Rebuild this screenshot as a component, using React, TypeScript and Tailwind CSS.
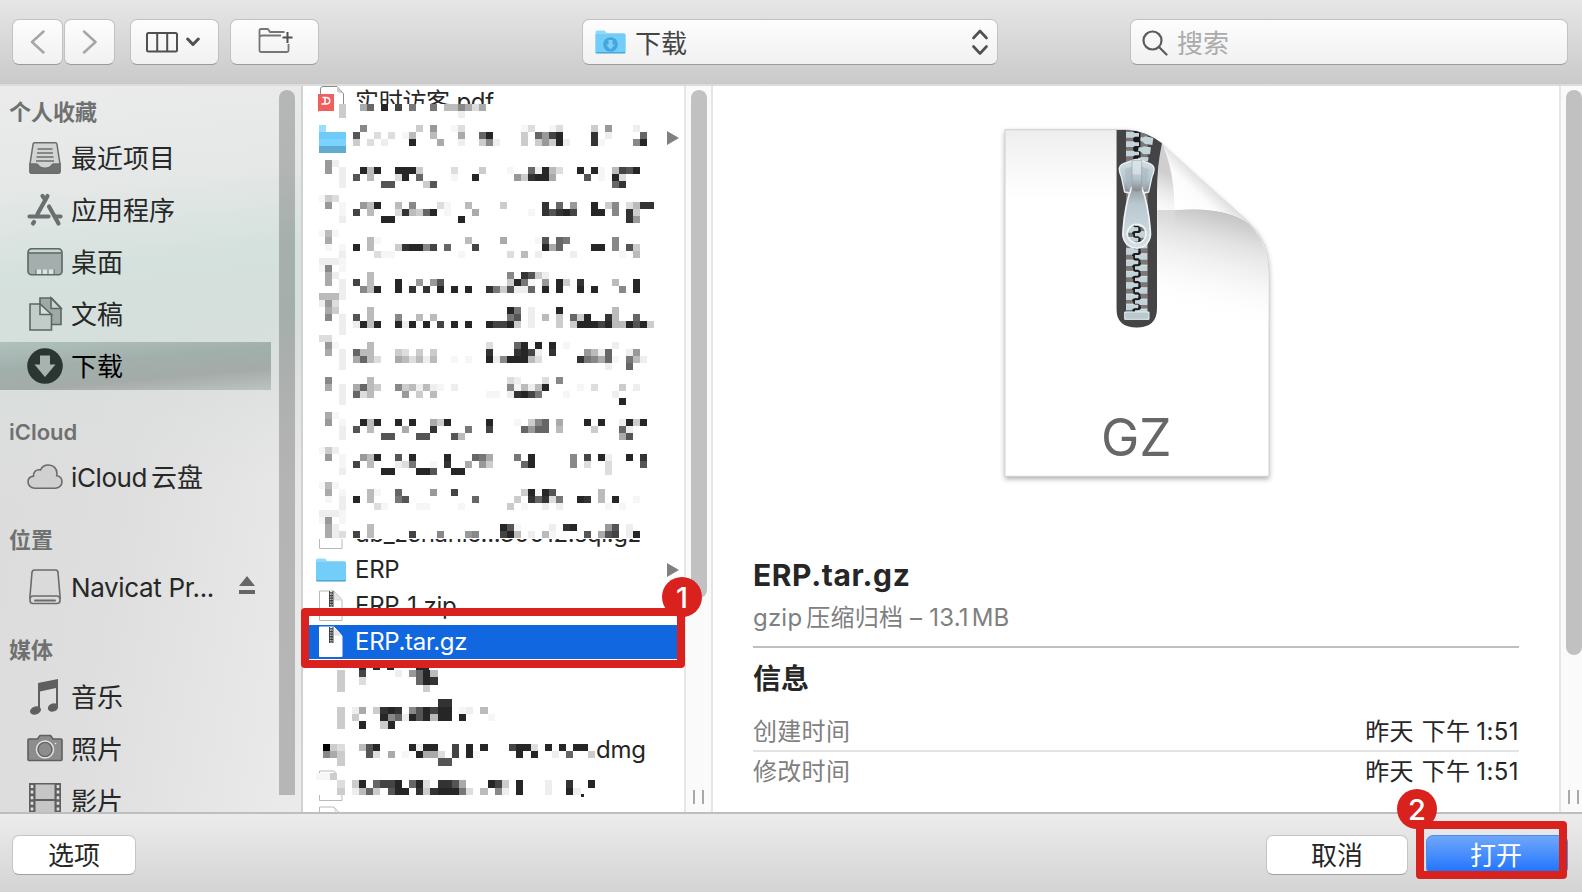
import { ReactNode } from 'react';
import { clsx } from 'clsx';

// Each token is a column number followed by one grey level digit (0 = black, f = white)
const upperMosaic: Record<number, string> = {
    0: '3c 6a 76 92 114 137 167 18b 19b 208 21a 22d 23a',
    1: '3c 20e',
    3: '68 14c 169 19f 20d 29f 30d 33f 34d 39c 419 45e',
    4: '55 8d 10d 12f 13b 16b 20a 236 242 29c 316 329 334 342 393 41e 466',
    5: '5c 7d 9e 132 17a 20e 23c 248 25e 29c 31c 329 33c 342 35e 393 40f 458 462',
    8: '19 2e',
    9: '19 3e 62 7b 82 112 122 132 14c 19d 23c 27f 306 31e 322 33b 34d 372 392 40f 42b 434 445 452',
    10: '3e 55 7b 11d 122 146 19f 222 289 29c 303 312 322 33a 385 40f 422 43d',
    11: '3e 95 105 15c 165 426 433',
    13: '0f 1c 2d',
    14: '19 3f 69 7b 82 11b 138 17d 18f 21b 26c 323 346 369 392 41c 428 44d 45b 463 473',
    15: '3f 54 7b 11d 123 13b 14c 156 162 18f 22a 30f 323 335 343 352 364 392 402 428 443 45c',
    16: '3e 92 102 202 443 459',
    18: '0f 1b 2f',
    19: '1a 7b 8f 21b 26a 31f 325 346 357 428',
    20: '1f 3f 52 7b 11c 123 132 142 158 164 186 224 322 33a 346 392 402 428 445 45c',
    21: '3e 8d 9f 10f 20f 27d 29b 31e 36e 43f 45b',
    22: '0e 1e 2e 3f',
    23: '0f 18 3f',
    24: '1a 2e 7b 278 293 305 31c 32e',
    25: '1a 3e 54 7b 112 149 169 175 27c 282 297 30f 329 342 35c 373 42b 452',
    26: '3e 68 7b 82 112 133 153 172 192 212 243 257 26c 275 28e 29e 306 322 342 372 392 438 452',
    27: '0b 1b 2b 3e',
    28: '0e 19 2d',
    29: '1a 2c 7b 272 287 30e 342 42b',
    30: '18 3e 55 7b 118 14b 16b 277 285 30e 32b 34c 366 37c 382 413 42b 456',
    31: '3e 5e 62 7b 82 112 12e 132 152 174 192 212 242 254 264 272 28c 30e 34c 36c 372 382 392 404 412 42b 43b 442 455 462 47c',
    32: '3e',
    33: '0d 1d',
    34: '19 2f 7b 24d 286 292 312 332 35f 42e',
    35: '1a 3e 56 6b 7b 11c 12d 14c 16c 243 283 292 304 31e 333 389 39b 40e 416 44e 459',
    36: '3e 5a 66 7b 8d 11a 12b 13d 14b 15e 16b 19f 21f 242 25e 268 272 282 292 30b 31d 373 387 398 40a 416 42f 447 45b 46e',
    37: '3e 41e 446',
    39: '18 7b 27d 28e 32d 348',
    40: '1a 3e 5a 66 7b 8c 118 12c 13b 14e 15b 16e 17f 19e 278 28f 29b 30e 31b 322 37f 39d 43c 45e',
    41: '3e 56 6d 7b 129 14c 16b 24f 25f 27e 283 292 304 317 35f 42e',
    42: '3e 432',
    44: '1a 2f',
    45: '19 3f 62 7b 82 112 132 16a 17c 182 242 28f 30c 318 326 34a 382 402 43e 442 45c 462',
    46: '3e 55 7b 12a 163 217 244 296 309 316 326 34b 39c 436 44e',
    47: '3e 95 105 145 155 195 20b 43a 445',
    49: '0f 1c 2e',
    50: '19 3f 69 7b 82 115 132 182 226 237 24a 287 302 368 384 402 41e 442 463',
    51: '3f 54 7b 11e 12d 137 16f 183 21a 239 24c 296 302 368 38d 41d 465',
    52: '3e 92 102 142 152 165 192 202 41d',
    54: '0f 1b 2f',
    55: '1a 3f 7b 8f 116 169 194 29c 302 31f 322 335 40b',
    56: '1f 3e 52 7b 117 125 226 28c 303 316 323 33d 347 372 383 40b 422 45f',
    57: '3e 8d 9f 14f 15f 20f 27c 29f 32e 34e 41f 43f',
    58: '0e 1e 2e 3f',
    59: '0f 19 3f',
    60: '1a 2e 7b 262 275 28f 33e 353 362 419 425 44e',
    61: '1a 2e 3d 54 7b 134 178 219 228 264 272 28b 30e 32b 33f 385 40a 415 424 44e 452',
};

const lowerMosaic: Record<number, string> = {
    0: '3c 64 11e 139 146 152 16b',
    1: '3c 6d 146 152 163',
    2: '3c 15c',
    4: '173 183',
    5: '3c 5e 6a 8c 93 102 113 138 145 152 164 172 182 20f 21e 23b',
    6: '3c 5c 92 108 116 12e 132 145 152 16b 172 182 202 24f',
    7: '3c 62 9c 102',
    10: '10 2c 3d 6b 75 82 132 14e 152 162 194 212 232 274 282 292 30d 322 342 362 372',
    11: '18 2a 3c 75 8d 10a 12f 142 15a 16a 17d 194 212 22f 282 302 33e 356 38c',
    12: '3c 175 185',
    14: '0f 1f 2c',
    15: '3d 5c 62 86 94 104 112 136 142 15d 173 183 195 20a 242 254 26c 282 32e 353 382',
    16: '3c 5e 6b 76 8c 105 112 122 143 15c 163 172 182 192 207 21d 23b 258 26e 282 32e 352 36e',
};

interface MosaicProps {
    cells: Record<number, string>;
    cellWidth: number;
    cellHeight: number;
    left: number;
    top: number;
}

function Mosaic({ cells, cellWidth, cellHeight, left, top }: MosaicProps) {
    return (
        <g shapeRendering="crispEdges">
            {Object.entries(cells).flatMap(([row, line]) =>
                line.split(' ').map((token) => {
                    const shade = token.slice(-1);
                    const x = left + Number(token.slice(0, -1)) * cellWidth;
                    const y = top + Number(row) * cellHeight;
                    const fill = shade === 'f' ? '#f6f6f6' : shade === '2' ? '#262626' : `#${shade}${shade}${shade}`;
                    return (
                        <rect
                            key={`${row}-${token}`}
                            x={Math.round(x)}
                            y={Math.round(y)}
                            width={Math.round(x + cellWidth) - Math.round(x)}
                            height={Math.round(y + cellHeight) - Math.round(y)}
                            fill={fill}
                        />
                    );
                }),
            )}
        </g>
    );
}

/* ---------- icons ---------- */

const iconBox = 'w-9 h-9 shrink-0';

function RecentsIcon() {
    return (
        <svg className={iconBox} viewBox="0 0 36 36" fill="none" stroke="#6b6d6d" strokeWidth="1.5">
            <path d="M7.500 2.800h21c.8 0 1.200.4 1.400 1.200L33 24v7.500c0 1-.8 1.700-1.700 1.700H4.700c-1 0-1.700-.7-1.700-1.700V24L6.100 4c.2-.8.600-1.200 1.400-1.200z" fill="#d2d4d4" />
            <path d="M3 24h6.500c.8 0 1.200.3 1.700 1.200 1.200 2 3.400 3 6.800 3s5.600-1 6.800-3c.5-.9.900-1.200 1.700-1.200H33v7.500c0 1-.8 1.700-1.700 1.700H4.700c-1 0-1.700-.7-1.700-1.700z" fill="#6f7171" />
            <path d="M10.500 9h15M10 13h16M9.500 17h17M9 21h18" />
        </svg>
    );
}

function AppsIcon() {
    return (
        <svg className={iconBox} viewBox="0 0 36 36" fill="none" stroke="#687070" strokeWidth="4.200" strokeLinecap="round">
            <path d="M20.500 4L10.500 22M15.500 4l3 4M22 14.500L31.500 31.500M6 31.500l1-1.500" />
            <path d="M2.500 24.500h19M29 24.500h4.500" />
        </svg>
    );
}

function DesktopIcon() {
    return (
        <svg className={iconBox} viewBox="0 0 36 36">
            <rect x="1" y="4.700" width="34" height="26" rx="3.500" fill="#a3aead" stroke="#5c6866" strokeWidth="1.600" />
            <path d="M2.500 8.500V7.500Q2.500 5.700 4.500 5.700h27q2 0 2 1.800v1z" fill="#cbd6d3" />
            <path d="M2 9h32" stroke="#5c6866" strokeWidth="1.500" />
            <rect x="9" y="25.500" width="18" height="4.500" fill="#dce5e2" />
            <path d="M9 25.500v4.500M15 25.500v4.500M21 25.500v4.500M27 25.500v4.500" stroke="#5c6866" strokeWidth="1" />
        </svg>
    );
}

function DocumentsIcon() {
    return (
        <svg className={iconBox} viewBox="0 0 36 36" stroke="#5c6765" strokeWidth="1.600">
            <path d="M13 2h11.500L34 12v16.500H13z" fill="#9daaa6" />
            <path d="M24 2v10.500h10z" fill="#cbd6d2" />
            <path d="M3 8h10l11.500 11v15H3z" fill="#c2ccc9" />
            <path d="M13 8v10.500h11.500z" fill="#d6dfdc" />
        </svg>
    );
}

function DownloadsIcon() {
    return (
        <svg className={iconBox} viewBox="0 0 36 36">
            <circle cx="18" cy="18" r="17.800" fill="#2b3633" />
            <path d="M13 7.500h10v9h5.500L18 29 7.500 16.500H13z" fill="#a7b3af" />
        </svg>
    );
}

function CloudIcon() {
    return (
        <svg className={iconBox} viewBox="0 0 36 36" fill="#d0d0d0" stroke="#6b6b6b" strokeWidth="1.600">
            <path d="M8 29.200C4 29.200 1 26.500 1 22.800c0-3 2.300-5.200 5.500-5.700C6 13 9.500 10 13.500 11c1.300-3.200 4-5 8-5 5 0 8.500 3.500 8.500 8.500 0 .8-.1 1.500-.3 2.300 3.300.5 5.300 3 5.300 6 0 3.700-3 6.400-7 6.400z" />
        </svg>
    );
}

function DriveIcon() {
    return (
        <svg className={iconBox} viewBox="0 0 36 36" fill="none" stroke="#6b6b6b" strokeWidth="1.600">
            <path d="M7.500 1h21c1.500 0 2.300.8 2.500 2.300L33 27v4.500c0 2-1 3-3 3H6c-2 0-3-1-3-3V27L5 3.300C5.200 1.800 6 1 7.500 1z" fill="#dadada" />
            <path d="M3 30c.3-2 1.300-3 3-3h24c1.700 0 2.700 1 3 3" />
            <path d="M8 31.500h20" strokeWidth="2" strokeLinecap="round" />
        </svg>
    );
}

function MusicIcon() {
    return (
        <svg className={iconBox} viewBox="0 0 36 36" fill="#5f5f5f">
            <path d="M11 4L31 0v29h-2V9l-16 3.500v19h-2z" />
            <ellipse cx="8.500" cy="31.500" rx="5.600" ry="4.100" transform="rotate(-20 8.500 31.500)" />
            <ellipse cx="26" cy="28.500" rx="5.300" ry="4.100" transform="rotate(-20 26 28.500)" />
        </svg>
    );
}

function PhotosIcon() {
    return (
        <svg className={iconBox} viewBox="0 0 36 36" stroke="#5f5f5f" strokeWidth="1.600">
            <path d="M2 8h8.500l2.500-3.500h10.500L26 8h8q1 0 1 1v19.500q0 1-1 1H2q-1 0-1-1V9q0-1 1-1z" fill="#8d8d8d" />
            <circle cx="18" cy="18.500" r="8.500" stroke="#e2e2e2" fill="#8d8d8d" />
            <circle cx="18" cy="18.500" r="7" fill="#8d8d8d" strokeWidth="1.200" />
            <circle cx="28.500" cy="12.500" r=".8" fill="#eee" stroke="none" />
        </svg>
    );
}

function MoviesIcon() {
    return (
        <svg className={iconBox} viewBox="0 0 36 36">
            <path d="M2 0h32v36H2z" fill="#5f5f5f" />
            <path d="M8.500 1.500h19V16h-19zM8.500 18h19v18h-19z" fill="#c6c6c6" />
            <path d="M5 2v34M31 2v34" stroke="#e0e0e0" strokeWidth="2.600" strokeDasharray="3 2.600" />
        </svg>
    );
}

function FolderIcon({ className }: { className?: string }) {
    return (
        <svg className={className} viewBox="0 0 30 24">
            <path d="M0 22V2.500Q0 .5 2 .5h6.500q1 0 1.500 1l1 1.500H28q2 0 2 2V22z" fill="#8fdafc" />
            <path d="M0 5.500h30V22q0 1.200-1.200 1.200H1.200Q0 23.200 0 22z" fill="#72cdf8" />
            <path d="M0 5h30" stroke="#5db9e6" strokeWidth=".8" />
            <path d="M0 22h30q0 1.500-1.300 1.500H1.300Q0 23.500 0 22z" fill="#4fa9d6" />
        </svg>
    );
}

function ZipIcon({ selected }: { selected?: boolean }) {
    return (
        <svg className="w-[26px] h-8" viewBox="0 0 26 32">
            <path d="M1.500 1H16l8 9v20.500H1.500z" fill="#fff" stroke={selected ? '#fff' : '#b9b9b9'} strokeWidth="1" />
            <path d="M16 1v9h8z" fill="#e6e6e6" stroke={selected ? '#fff' : '#ccc'} strokeWidth=".7" />
            <path d="M11 1h4.500v16H11z" fill="#3d3d3f" />
            <path d="M13.200 1v16" stroke="#dfe6e9" strokeWidth="2.600" strokeDasharray="1.300 1.300" />
            <path d="M13.200 4v11" stroke="#3d3d3f" strokeWidth=".8" />
        </svg>
    );
}

function BlankFileIcon() {
    return (
        <svg className="w-[26px] h-8" viewBox="0 0 26 32">
            <path d="M1.500 1H16l8 9v20.500H1.500z" fill="#fff" stroke="#b9b9b9" strokeWidth="1" />
            <path d="M16 1q2 4 1 8 4-.5 7 1z" fill="#ececec" stroke="#ccc" strokeWidth=".7" />
        </svg>
    );
}

function PdfIcon() {
    return (
        <svg className="w-[28px] h-8 -mt-[3px]" viewBox="0 0 28 32">
            <path d="M3.500 4Q3.500 1.500 6 1.500h14l6.500 7V31h-23z" fill="#fff" stroke="#8b8b8b" strokeWidth="1" />
            <path d="M20 1.500v5.500l6 1.500z" fill="#ccc" />
            <path d="M1 9h16v17.500H1z" fill="#ee5f5d" />
            <path d="M5.500 12.500H9c5 0 5 6.500 0 6.500H4.500M8 13v6" fill="none" stroke="#fff" strokeWidth="1.500" />
        </svg>
    );
}

// Left and right teeth of the zipper, drawn at the given height
function Teeth({ y }: { y: number }) {
    return (
        <g>
            <path d={`M438 ${y}h22l5 3h10v11h-10l-5 4h-22z`} fill="#c3d3da" />
            <path d={`M438 ${y}h22l5 3h10`} stroke="#eef4f6" strokeWidth="2" fill="none" />
            <path d={`M502 ${y + 15}h-22l-5 3h-10v11h10l5 4h22z`} fill="#c3d3da" />
            <path d={`M502 ${y + 15}h-22l-5 3h-10`} stroke="#eef4f6" strokeWidth="2" fill="none" />
            <path d={`M459 ${y + 22}q0-6 7-6h7q7 0 7-7`} stroke="#1c1b1c" strokeWidth="6" fill="none" />
        </g>
    );
}

function ArchivePreview() {
    return (
        <svg className="w-[310px] h-[390px]" viewBox="0 0 930 1170">
            <defs>
                <linearGradient id="sheet" x1="0" y1="0" x2="0" y2="1">
                    <stop offset="0" stopColor="#ededed" />
                    <stop offset=".05" stopColor="#f3f3f3" />
                    <stop offset=".2" stopColor="#ffffff" />
                </linearGradient>
                <linearGradient id="curlShade" gradientUnits="userSpaceOnUse" x1="745" y1="290" x2="660" y2="620">
                    <stop offset="0" stopColor="#bdbdbd" />
                    <stop offset=".3" stopColor="#e2e2e2" />
                    <stop offset="1" stopColor="#ffffff" stopOpacity="0" />
                </linearGradient>
                <linearGradient id="sideShade" gradientUnits="userSpaceOnUse" x1="584" y1="200" x2="530" y2="330">
                    <stop offset="0" stopColor="#cfcfcf" />
                    <stop offset="1" stopColor="#f4f4f4" stopOpacity="0" />
                </linearGradient>
                <linearGradient id="curl" gradientUnits="userSpaceOnUse" x1="600" y1="290" x2="690" y2="195">
                    <stop offset="0" stopColor="#ffffff" />
                    <stop offset=".5" stopColor="#fbfbfb" />
                    <stop offset="1" stopColor="#cfcfcf" />
                </linearGradient>
                <linearGradient id="slider" x1="0" y1="0" x2="0" y2="1">
                    <stop offset="0" stopColor="#d6e1e6" />
                    <stop offset=".6" stopColor="#b3c3cb" />
                    <stop offset="1" stopColor="#85898c" />
                </linearGradient>
                <linearGradient id="pull" x1="0" y1="0" x2="0" y2="1">
                    <stop offset="0" stopColor="#8f9699" />
                    <stop offset=".3" stopColor="#b9c8cf" />
                    <stop offset="1" stopColor="#d5e0e5" />
                </linearGradient>
                <filter id="drop" x="-10%" y="-10%" width="120%" height="120%">
                    <feDropShadow dx="0" dy="7" stdDeviation="8" floodOpacity=".32" />
                </filter>
                <clipPath id="tape">
                    <path d="M409 60h30q62 4 107 40-15 70-15 150v345q0 58-61 58t-61-58z" />
                </clipPath>
            </defs>
            <path
                d="M75 59H440q66 4 115 54L806 337q61 55 61 150v612H75z"
                fill="url(#sheet)"
                stroke="#bdbdbd"
                strokeWidth="2"
                filter="url(#drop)"
            />
            <path d="M584 300q150-12 222 40 58 55 60 150v160H532V300z" fill="url(#curlShade)" />
            <path d="M546 100q36 80 38 200v60h-52V250q0-80 14-150z" fill="url(#sideShade)" />
            <path d="M546 100q38 50 38 200 140-14 222 38z" fill="url(#curl)" />
            <g clipPath="url(#tape)">
                <path d="M400 50h160v610H400z" fill="#444346" />
                <path d="M438 60h22v550h-22zM481 60h22v550h-22z" fill="#7c7775" />
                <path d="M460 60h21v550h-21z" fill="#1c1b1c" />
                <path d="M438 66h22l5 3h12v11h-12l-5 3h-22zM438 94h22l5 3h12v11h-12l-5 3h-22zM438 122h22l5 3h12v11h-12l-5 3h-22z" fill="#c3d3da" />
                <path d="M520 84l-24-5-5 3-8-1-3 10 8 4 7 7 22 3zM513 112l-22-3-5 3-10 0-2 10 9 3 6 7 21 1zM506 142l-20-1-12 3v10h30z" fill="#c3d3da" />
                {[318, 350, 382, 416, 450, 484, 518, 552, 582].map((y) => (
                    <Teeth key={y} y={y} />
                ))}
            </g>
            <path d="M434 606h73v22h-73z" fill="#b9c9d0" stroke="#e6eef1" strokeWidth="3" />
            <path d="M434 246l-10-46q-6-14-6-20-1-15 14-20l24-8q14-7 28 0l24 8q15 5 14 20 0 6-6 20l-10 46q-36 9-72 0z" fill="url(#slider)" stroke="#e9f0f2" strokeWidth="4" />
            <path d="M434 178q36-18 72 0l-9 60h-54z" fill="#a5b5bd" opacity=".55" />
            <path
                d="M455 232q15-12 30 0 20 50 26 130c8 70-90 70-82 0q6-80 26-130zM470 343a28 28 0 1 0 .1 0z"
                fill="url(#pull)"
                fillRule="evenodd"
                stroke="#eff4f6"
                strokeWidth="5"
            />
            <path d="M456 151h29v88q-14 10-29 0z" fill="url(#slider)" stroke="#8c999f" strokeWidth="1.500" />
            <path d="M458 153h25v40h-25z" fill="#dbe6ea" opacity=".7" />
            <text x="469" y="1038" textAnchor="middle" fontFamily="Inter, sans-serif" fontSize="156" textLength="212" lengthAdjust="spacingAndGlyphs" fill="#676767">
                GZ
            </text>
        </svg>
    );
}

/* ---------- pieces ---------- */

const control =
    'h-[46px] rounded-[7px] border border-[#c2c2c2] border-b-[#9c9c9c] bg-linear-to-b from-[#fdfdfd] to-[#f1f1f1] flex items-center shrink-0';

function Toolbar() {
    return (
        <header className="h-[86px] shrink-0 bg-linear-to-b from-[#e6e6e6] to-[#cacaca] border-b-2 border-[#dcdcdc] flex pt-[19px] pl-3">
            <button className={clsx(control, 'w-[51px] justify-center')}>
                <svg className="w-4 h-6" viewBox="0 0 16 24" fill="none" stroke="#a6a6a6" strokeWidth="2.500" strokeLinecap="round" strokeLinejoin="round">
                    <path d="M13.500 1.500L2 12l11.500 10.500" />
                </svg>
            </button>
            <button className={clsx(control, 'w-[51px] ml-px justify-center')}>
                <svg className="w-4 h-6" viewBox="0 0 16 24" fill="none" stroke="#a6a6a6" strokeWidth="2.500" strokeLinecap="round" strokeLinejoin="round">
                    <path d="M2 1.500L13.500 12 2 22.500" />
                </svg>
            </button>
            <button className={clsx(control, 'w-[89px] ml-[15px] pl-[15px] gap-2')}>
                <svg className="w-8 h-[21px]" viewBox="0 0 32 21" fill="none" stroke="#505050" strokeWidth="2">
                    <rect x="1" y="1" width="30" height="18.500" rx="1.500" />
                    <path d="M11.200 1v18.500M21.200 1v18.500" />
                </svg>
                <svg className="w-3.5 h-[10px]" viewBox="0 0 14 10" fill="none" stroke="#505050" strokeWidth="3" strokeLinecap="round" strokeLinejoin="round">
                    <path d="M1.700 2L7 7.500 12.300 2" />
                </svg>
            </button>
            <button className={clsx(control, 'w-[89px] ml-[11px] pl-[27px] pb-1')}>
                <svg className="w-9 h-[25px]" viewBox="0 0 36 25" fill="none" stroke="#757575" strokeWidth="1.800">
                    <path d="M26.500 4H12l-1.500-2.200q-.4-.8-1.300-.8H3q-1.500 0-1.500 1.500v20q0 1.500 1.500 1.500h26q1.500 0 1.500-1.500v-6.500M2 9q0-1.500 2-1.500h19" />
                    <path d="M29.500 4v11M24.500 9.500h10" stroke="#505050" strokeWidth="2" />
                </svg>
            </button>
            <div className={clsx(control, 'w-[416px] ml-[263px] pl-3 pr-2')}>
                <div className="relative w-[31px] h-6">
                    <FolderIcon className="w-[31px] h-6" />
                    <svg className="absolute left-2 top-[7px] w-[15px] h-[15px]" viewBox="0 0 15 15">
                        <circle cx="7.500" cy="7.500" r="7.300" fill="#45a6dd" />
                        <path d="M5.500 3h4v4.500H12l-4.500 5L3 7.500h2.500z" fill="#7ccff5" />
                    </svg>
                </div>
                <span className="ml-[9px] mt-0.5 flex-1 text-[26px] text-[#454545]">下载</span>
                <svg className="w-[18px] h-[26px]" viewBox="0 0 18 26" fill="none" stroke="#505050" strokeWidth="2.600" strokeLinecap="round" strokeLinejoin="round">
                    <path d="M2.500 9L9 2l6.500 7M2.500 17.500L9 24.500l6.500-7" />
                </svg>
            </div>
            <div className={clsx(control, 'w-[438px] ml-[132px] pl-[11px]')}>
                <svg className="w-[26px] h-[26px] mt-px" viewBox="0 0 26 26" fill="none" stroke="#5b5b5b" strokeWidth="2.200" strokeLinecap="round">
                    <circle cx="10.500" cy="10.500" r="9" />
                    <path d="M17 17l7.500 7.500" />
                </svg>
                <span className="ml-[9px] mt-0.5 text-[26px] text-[#ababab]">搜索</span>
            </div>
        </header>
    );
}

function SectionTitle({ className, children }: { className: string; children: ReactNode }) {
    return <h2 className={clsx('pl-[9px] text-[22px] leading-[30px] font-semibold text-[#6f7171] shrink-0', className)}>{children}</h2>;
}

interface SideItemProps {
    icon: ReactNode;
    label: ReactNode;
    active?: boolean;
    trailing?: ReactNode;
}

function SideItem({ icon, label, active, trailing }: SideItemProps) {
    return (
        <div className="h-[52px] w-[271px] shrink-0 flex items-center">
            <div className={clsx('h-12 w-full pl-[27px] pr-4 flex items-center gap-2', active && 'bg-[linear-gradient(175deg,#b0c1bc_0%,#a1afab_40%,#a4aba8_70%,#bcc3c0_100%)]')}>
                {icon}
                <span className={clsx('flex-1 pt-px text-[26px] leading-[36px] whitespace-nowrap', active ? 'text-black' : 'text-[#262828]')}>{label}</span>
                {trailing}
            </div>
        </div>
    );
}

function Sidebar() {
    return (
        <aside className="w-[303px] shrink-0 flex border-r-2 border-[#cfd2d1] bg-[linear-gradient(100deg,#dbdbdb_0%,#dedede_45%,#ebebeb_100%)]">
            <div className="flex w-full bg-[linear-gradient(174deg,#ebebeb_0%,#e5e8e7_14%,#d5e1dd_25%,#d5dfdb_34%,#dcdfde80_46%,transparent_56%)]">
                <div className="w-[279px] flex flex-col overflow-hidden">
                    <SectionTitle className="h-[46px] pt-[11px]">个人收藏</SectionTitle>
                    <SideItem icon={<RecentsIcon />} label="最近项目" />
                    <SideItem icon={<AppsIcon />} label="应用程序" />
                    <SideItem icon={<DesktopIcon />} label="桌面" />
                    <SideItem icon={<DocumentsIcon />} label="文稿" />
                    <SideItem icon={<DownloadsIcon />} label="下载" active />
                    <SectionTitle className="h-[59px] pt-[25px]">iCloud</SectionTitle>
                    <SideItem icon={<CloudIcon />} label={<><span className="tracking-[-0.4px]">iCloud</span><span className="ml-1">云盘</span></>} />
                    <SectionTitle className="h-[58px] pt-[22px]">位置</SectionTitle>
                    <SideItem
                        icon={<DriveIcon />}
                        label={<span className="tracking-[-0.35px]">Navicat Pr...</span>}
                        trailing={
                            <svg className="w-4 h-[18px] -mt-1" viewBox="0 0 16 18" fill="#666">
                                <path d="M8 0l8 10H0zM0 14h16v4H0z" />
                            </svg>
                        }
                    />
                    <SectionTitle className="h-[58px] pt-[22px]">媒体</SectionTitle>
                    <SideItem icon={<MusicIcon />} label="音乐" />
                    <SideItem icon={<PhotosIcon />} label="照片" />
                    <SideItem icon={<MoviesIcon />} label="影片" />
                </div>
                <div className="w-4 mt-1 h-[705px] rounded-t-full bg-black/22" />
            </div>
        </aside>
    );
}

interface FileRowProps {
    icon?: ReactNode;
    name?: string;
    folder?: boolean;
    selected?: boolean;
}

function FileRow({ icon, name, folder, selected }: FileRowProps) {
    return (
        <div className="h-9 shrink-0 flex">
            <div className={clsx('w-full h-[34px] flex items-center pl-[13px] pr-[5px]', selected ? 'bg-[#1167df] text-white' : 'text-[#262626]')}>
                <span className="w-[30px] flex justify-center">{icon}</span>
                <span className="ml-[9px] flex-1 text-2xl leading-[34px] tracking-[-0.3px] whitespace-nowrap">{name}</span>
                {folder && (
                    <svg className="w-3 h-3.5" viewBox="0 0 12 14" fill="#808080">
                        <path d="M0 0l12 7-12 7z" />
                    </svg>
                )}
            </div>
        </div>
    );
}

const fileRows: FileRowProps[] = [
    { icon: <PdfIcon />, name: '实时访客.pdf' },
    { folder: true },
    ...Array.from({ length: 10 }, () => ({})),
    { icon: <BlankFileIcon />, name: 'db_zenanic...30012.sql.gz' },
    { icon: <FolderIcon className="w-[30px] h-6" />, name: 'ERP', folder: true },
    { icon: <ZipIcon />, name: 'ERP_1.zip' },
    { icon: <ZipIcon selected />, name: 'ERP.tar.gz', selected: true },
    {},
    {},
    {},
    { icon: <BlankFileIcon /> },
    { icon: <BlankFileIcon /> },
];

function FileColumn() {
    return (
        <div className="relative w-[381px] shrink-0 bg-white">
            <div className="h-full overflow-hidden">
                <div className="-mt-px flex flex-col">
                    {fileRows.map((row, i) => (
                        <FileRow key={i} {...row} />
                    ))}
                </div>
            </div>
            {/* Redacted names */}
            <svg className="absolute left-0 top-0 w-[381px] h-[726px]" viewBox="303 86 381 726">
                <path d="M339 104h320v20h-320zM306 124h350v415h-350zM306 662h350v66h-350z" fill="#fff" />
                <path d="M319 111h20v12h-20z" fill="#fff" />
                <path d="M319 125h7v7h-7z" fill="#99deff" />
                <path d="M319 132h27v7h-27z" fill="#6ecbf8" />
                <path d="M319 139h27v7h-27z" fill="#7ad3ff" />
                <path d="M319 146h27v7h-27z" fill="#60abd0" />
                <Mosaic cells={upperMosaic} cellWidth={6.99} cellHeight={7} left={318.5} top={104} />
                <path d="M316 773h280v22h-280z" fill="#fff" />
                <Mosaic cells={lowerMosaic} cellWidth={7.15} cellHeight={7.35} left={316} top={670} />
                <path d="M359 668h7v2h-7zM373 668h7v2h-7zM387 668h7v2h-7zM416 668h13v2h-13z" fill="#262626" />
                <path d="M581 794h3v3h-3z" fill="#262626" />
                <text x="596" y="758" fontFamily="Inter, sans-serif" fontSize="24" textLength="50" fill="#262626">
                    dmg
                </text>
            </svg>
        </div>
    );
}

function ScrollTrack({ className, thumb }: { className: string; thumb: string }) {
    return (
        <div className={clsx('shrink-0 bg-[#fafafa] border-l-2 border-[#e6e6e6] flex flex-col justify-between overflow-hidden', className)}>
            <div className={clsx('mt-1 ml-[5px] w-4 rounded-full bg-[#c1c1c1]', thumb)} />
            <div className="ml-[7px] mb-2 w-[11px] h-3.5 shrink-0 border-x-2 border-[#a8a8a8]" />
        </div>
    );
}

function TimeRow({ className, label }: { className: string; label: string }) {
    return (
        <div className={clsx('flex justify-between text-2xl leading-[34px] text-[#262626]', className)}>
            <span className="text-[#808080] tracking-[0.3px]">{label}</span>
            <span className="tracking-[0.3px]">
                昨天<span className="ml-2">下午</span>
                <span className="ml-1.5 tracking-[0.4px]">1:51</span>
            </span>
        </div>
    );
}

function Preview() {
    return (
        <section className="w-[846px] shrink-0 bg-white px-10">
            <div className="flex pl-[227px] pt-6">
                <ArchivePreview />
            </div>
            <h1 className="mt-[56px] h-[38px] text-[30px] leading-[38px] tracking-[0.6px] font-bold text-[#262626]">ERP.tar.gz</h1>
            <p className="mt-[7px] h-[34px] text-2xl leading-[34px] tracking-[0.2px] text-[#808080] whitespace-nowrap">
                gzip<span className="ml-1">压缩归档</span> – 13.1<span className="ml-[3px]">MB</span>
            </p>
            <div className="mt-[11px] h-0.5 bg-[#bfbfbf]" />
            <h2 className="mt-3 h-[38px] text-[28px] leading-[38px] font-bold text-[#262626]">信息</h2>
            <TimeRow className="mt-[17px] h-[37px] border-b-2 border-[#e3e3e3]" label="创建时间" />
            <TimeRow className="mt-[3px]" label="修改时间" />
        </section>
    );
}

const dialogButton = 'h-10 rounded-[7px] border text-[26px] leading-[40px] text-center shrink-0';

function Footer() {
    return (
        <footer className="h-20 shrink-0 border-t-2 border-[#bdbfbf] bg-linear-to-b from-[#ececec] to-[#d4d4d4] flex pt-[21px] pl-3">
            <button className={clsx(dialogButton, 'w-[124px] bg-white border-[#c4c4c4] border-b-[#a0a0a0] text-[#262626]')}>选项</button>
            <button className={clsx(dialogButton, 'w-[142px] ml-[1130px] bg-white border-[#c4c4c4] border-b-[#a0a0a0] text-[#262626]')}>取消</button>
            <button className={clsx(dialogButton, 'w-[142px] ml-[18px] pr-0.5 bg-linear-to-b from-[#6ea6fa] to-[#1670fd] border-[#4c8bef] text-white')}>打开</button>
        </footer>
    );
}

function StepBadge({ className, children }: { className: string; children: ReactNode }) {
    return (
        <div className={clsx('absolute w-10 h-10 rounded-full bg-[#d9221d] text-white text-[29px] leading-[42px] font-medium text-center', className)}>
            {children}
        </div>
    );
}

export default function App() {
    return (
        <div className="relative w-[1582px] h-[892px] overflow-hidden flex flex-col bg-white font-['Inter','Noto_Sans_CJK_SC',sans-serif]">
            <Toolbar />
            <main className="h-[726px] flex shrink-0 overflow-hidden">
                <Sidebar />
                <FileColumn />
                <ScrollTrack className="w-[29px] border-r-2" thumb="h-[508px]" />
                <Preview />
                <ScrollTrack className="w-[23px]" thumb="h-[565px]" />
            </main>
            <Footer />

            {/* Step markers */}
            <div className="absolute left-[301px] top-[608px] w-[384px] h-[60px] border-8 border-[#d9221d] rounded-[4px]" />
            <StepBadge className="left-[662px] top-[577px]">1</StepBadge>
            <div className="absolute left-[1416px] top-[821px] w-[151px] h-[58px] border-8 border-[#d9221d] rounded-[4px]" />
            <StepBadge className="left-[1397px] top-[789px]">2</StepBadge>
        </div>
    );
}
